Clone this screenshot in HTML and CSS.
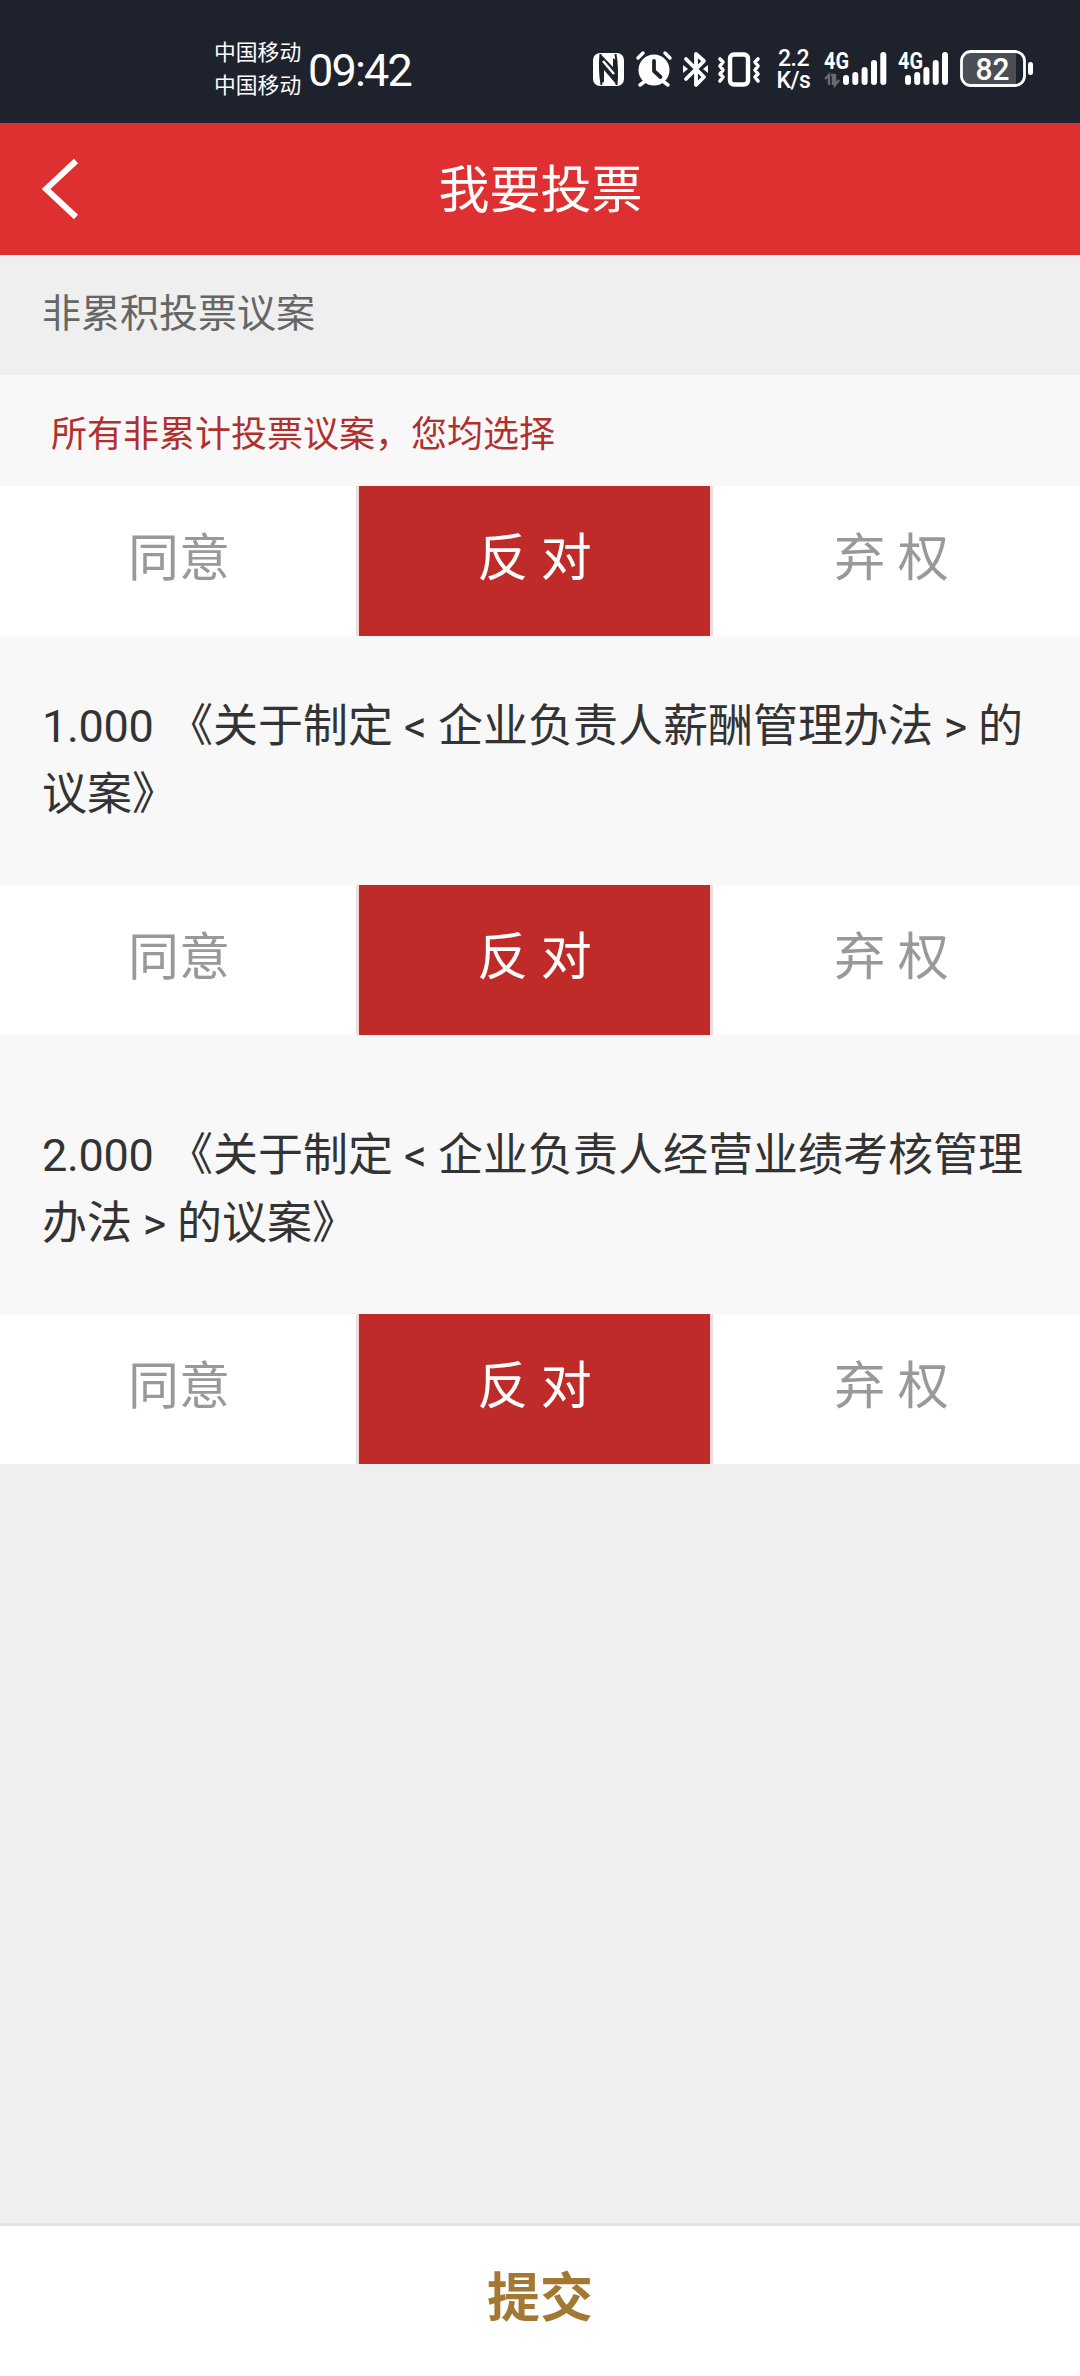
FILE: index.html
```html
<!DOCTYPE html>
<html lang="zh-CN">
<head>
    <meta charset="UTF-8">
    <meta name="viewport" content="width=device-width, initial-scale=1.0">
    <title>我要投票</title>
    <link rel="stylesheet" href="styles.css">
</head>
<body>

    <div class="status-bar">
        <div class="carriers">
            <div>中国移动</div>
            <div>中国移动</div>
        </div>
        <div class="clock">09:42</div>
        <div class="status-icons">
            <!-- NFC -->
            <svg width="32" height="40" viewBox="0 0 32 40">
                <rect x="0" y="4" width="31" height="33" rx="7" fill="#fff"/>
                <path d="M7.500 5Q6 20 8.500 36M22.500 5Q25 20 23.500 36" stroke="#1e222c" stroke-width="2" fill="none"/>
                <path d="M7.500 5L20 18V9l3 2v24L11 21v12l-3 1z" fill="#1e222c"/>
                <path d="M10 12l11 13" stroke="#fff" stroke-width="2.400"/>
            </svg>
            <!-- Alarm -->
            <svg class="alarm" width="36" height="40" viewBox="0 0 36 40">
                <circle cx="18" cy="21" r="15.500" fill="#fff"/>
                <path d="M2 9l5-5M34 9l-5-5M8 33l-4 3M28 33l4 3" stroke="#fff" stroke-width="3.500" stroke-linecap="round"/>
                <path d="M18 12v10l6.500 6" stroke="#1e222c" stroke-width="3.800" stroke-linecap="round" stroke-linejoin="round" fill="none"/>
            </svg>
            <!-- Bluetooth -->
            <svg class="bluetooth" width="26" height="40" viewBox="0 0 26 40">
                <path d="M3 10l18 18-8 8V5l8 7L3 30" stroke="#fff" stroke-width="3.800" stroke-linejoin="round" stroke-linecap="round" fill="none"/>
                <path d="M0 16l5 4-5 4zM25 16l-5 4 5 4z" fill="#fff"/>
            </svg>
            <!-- Vibrate -->
            <svg class="vibrate" width="42" height="40" viewBox="0 0 42 40">
                <rect x="12" y="5.500" width="18" height="30" rx="4" stroke="#fff" stroke-width="4.400" fill="none"/>
                <path d="M2 10l3 3-3 4 3 4-3 4 3 3-3 4M40 10l-3 3 3 4-3 4 3 4-3 3 3 4" stroke="#fff" stroke-width="3.600" stroke-linejoin="round" stroke-linecap="round" fill="none"/>
            </svg>
            <div class="speed">
                <div>2.2</div>
                <div>K/s</div>
            </div>
            <svg class="signal" width="64" height="40" viewBox="0 0 64 40">
                <text x="0" y="20" class="net" textLength="25" lengthAdjust="spacingAndGlyphs">4G</text>
                <path d="M1 30l4-4v10M7 26h2v10M11 25v11l4-5" fill="none" stroke="#686b73" stroke-width="2.400"/>
                <path d="M22 29v4M31.300 26v7M40.600 21v12M50 14v19M59.300 6v27" stroke="#fff" stroke-width="6" stroke-linecap="round"/>
            </svg>
            <svg class="signal second" width="52" height="40" viewBox="0 0 52 40">
                <text x="0" y="20" class="net" textLength="25" lengthAdjust="spacingAndGlyphs">4G</text>
                <path d="M10 29v4M19.200 26v7M28.400 21v12M37.700 14v19M47 6v27" stroke="#fff" stroke-width="6" stroke-linecap="round"/>
            </svg>
            <svg class="battery" width="74" height="40" viewBox="0 0 74 40">
                <path d="M56 3H12a9 9 0 0 0-9 9v14a9 9 0 0 0 9 9h44z" fill="#4d4f58"/>
                <rect x="1.500" y="2.500" width="63" height="34" rx="9.500" stroke="#fff" stroke-width="2.800" fill="none"/>
                <rect x="68" y="13" width="5" height="13" rx="2.500" fill="#fff"/>
                <text x="15.500" y="31" class="level" textLength="34" lengthAdjust="spacingAndGlyphs">82</text>
            </svg>
        </div>
    </div>

    <div class="header">
        <svg class="back" width="38" height="62" viewBox="0 0 38 62">
            <path d="M34 3L4 31l30 28" stroke="#fff" stroke-width="6" fill="none"/>
        </svg>
        <div class="header-title">我要投票</div>
    </div>

    <div class="section-title">非累积投票议案</div>

    <div class="vote-all">所有非累计投票议案，您均选择</div>
    <div class="options">
        <div class="option agree">同意</div>
        <div class="option against selected">反 对</div>
        <div class="option abstain">弃 权</div>
    </div>

    <div class="question">
        <span class="number">1.000</span>《关于制定<span class="angle">&lt;</span>企业负责人薪酬管理办法<span class="angle">&gt;</span>的<br>议案》
    </div>
    <div class="options">
        <div class="option agree">同意</div>
        <div class="option against selected">反 对</div>
        <div class="option abstain">弃 权</div>
    </div>

    <div class="question spaced">
        <span class="number">2.000</span>《关于制定<span class="angle">&lt;</span>企业负责人经营业绩考核管理<br>办法<span class="angle">&gt;</span>的议案》
    </div>
    <div class="options">
        <div class="option agree">同意</div>
        <div class="option against selected">反 对</div>
        <div class="option abstain">弃 权</div>
    </div>

    <div class="submit">提交</div>

</body>
</html>
```
FILE: styles.css
```css
* {
    box-sizing: border-box;
}
body {
    font-family: Roboto, "Noto Sans CJK SC", sans-serif;
    margin: 0;
    width: 1080px;
    height: 2376px;
    display: flex;
    flex-direction: column;
    background-color: #efefef;
}
.status-bar {
    height: 123px;
    flex-shrink: 0;
    display: flex;
    padding-left: 214px;
    background-color: #1e222c;
    color: #fff;
    white-space: nowrap;
}
.carriers {
    width: 94px;
    padding-top: 36px;
    font-size: 21.8px;
    line-height: 33px;
}
.clock {
    width: 285px;
    padding-top: 44px;
    font-size: 45px;
    line-height: 54px;
    letter-spacing: -1.8px;
}
.status-icons {
    display: flex;
    padding-top: 49px;
}
.status-icons svg {
    flex-shrink: 0;
    overflow: visible;
}
.alarm {
    margin-left: 11px;
}
.bluetooth {
    margin-left: 11px;
}
.vibrate {
    margin-left: 9px;
}
.speed {
    width: 37px;
    margin-left: 15px;
    margin-top: -1px;
    font-size: 23px;
    line-height: 22px;
    letter-spacing: -0.5px;
    font-weight: 500;
    text-align: center;
}
.signal {
    margin-left: 12px;
}
.signal.second {
    margin-left: 10px;
}
.net {
    font-size: 24px;
    font-weight: 700;
    fill: #fff;
}
.battery {
    margin-left: 10px;
}
.level {
    font-size: 32px;
    font-weight: 500;
    fill: #fff;
}
.header {
    height: 132px;
    flex-shrink: 0;
    display: flex;
    align-items: center;
    padding: 0 42px;
    background-color: #de3031;
    color: #fff;
}
.header-title {
    flex: 1;
    margin-right: 37px;
    padding-bottom: 6px;
    font-size: 51px;
    text-align: center;
}
.section-title {
    height: 120px;
    flex-shrink: 0;
    padding-left: 42px;
    font-size: 39px;
    line-height: 119px;
    color: #666;
}
.vote-all {
    height: 111px;
    flex-shrink: 0;
    padding-left: 51px;
    font-size: 36px;
    line-height: 120px;
    background-color: #f8f8f8;
    color: #b1302d;
}
.options {
    height: 150px;
    flex-shrink: 0;
    display: flex;
    background-color: #fff;
}
.option {
    font-size: 51px;
    line-height: 146px;
    text-align: center;
    color: #999;
}
.agree {
    width: 356px;
    padding-left: 2px;
}
.against {
    width: 357px;
    border-left: 3px solid #eedddd;
    border-right: 3px solid #eedddd;
}
.abstain {
    width: 357px;
}
.selected {
    background-color: #be2b29;
    background-clip: padding-box;
    color: #fff;
}
.question {
    height: 249px;
    flex-shrink: 0;
    padding: 57px 0 0 42px;
    font-size: 45px;
    line-height: 68px;
    background-color: #f8f8f8;
    color: #333;
    white-space: nowrap;
}
.question.spaced {
    height: 279px;
    padding-top: 87px;
}
.number {
    display: inline-block;
    width: 126px;
    line-height: 1;
    letter-spacing: -0.3px;
}
.angle {
    display: inline-block;
    width: 45px;
    line-height: 1;
    text-align: center;
}
.submit {
    height: 153px;
    flex-shrink: 0;
    margin-top: auto;
    border-top: 3px solid #e3e3e3;
    background-color: #fff;
    color: #a27833;
    font-size: 53px;
    font-weight: 700;
    line-height: 147px;
    text-align: center;
}
```
